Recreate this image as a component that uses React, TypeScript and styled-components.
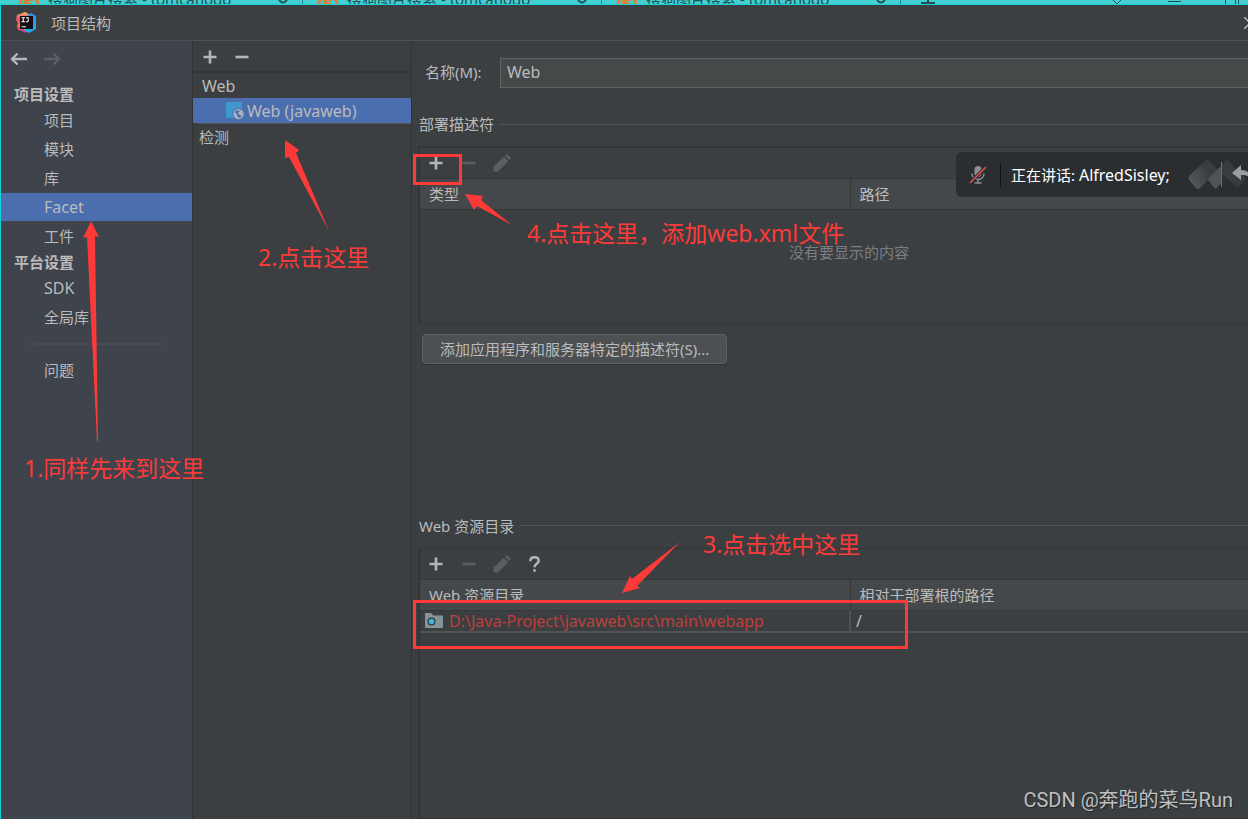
import React from 'react';
import styled, { createGlobalStyle } from 'styled-components';

const uiFont = '"Noto Sans", "Noto Sans CJK SC", sans-serif';

const GlobalStyle = createGlobalStyle`
  * { box-sizing: border-box; }
  body { margin: 0; background: #3c3f41; }
  button, input { font: inherit; color: inherit; }
`;

const Screen = styled.div`
  position: relative;
  display: flex;
  flex-direction: column;
  min-height: 100vh;
  overflow: hidden;
  background: #3c3f41;
  color: #bbbbbb;
  font-family: ${uiFont};
  font-size: 15px;
  line-height: 24px;
`;

/* Browser tabs showing behind the dialog */
const TabStrip = styled.div`
  display: flex;
  height: 5px;
  padding-left: 4px;
  overflow: hidden;
  background: #44cfd2;
  border-bottom: 1px solid #16d4d6;
  color: #1e5054;
`;
const Tab = styled.div`
  display: flex;
  align-items: flex-end;
  flex: none;
  width: 299px;
  height: 4px;
  padding: 0 14px;
  gap: 8px;
  border-right: 1px solid #24888b;
`;
const TabTitle = styled.span`
  flex: 1;
  line-height: 10px;
  white-space: nowrap;
`;
const TabTools = styled.div`
  display: flex;
  flex: 1;
  padding: 0 8px 0 20px;
  justify-content: space-between;
`;

const Dialog = styled.div`
  display: flex;
  flex: 1;
  flex-direction: column;
  border-left: 1px solid #16d4d6;
`;
const TitleBar = styled.header`
  display: flex;
  align-items: center;
  height: 36px;
  padding-left: 15px;
  gap: 14px;
  border-bottom: 1px solid #515151;
`;
const Title = styled.h1`
  flex: 1;
  margin: 0;
  font-size: 15px;
  font-weight: 400;
`;
const CloseButton = styled.button`
  display: flex;
  width: 4px;
  padding: 0;
  overflow: hidden;
  border: 0;
  background: none;
  svg { flex: none; }
`;
const Body = styled.div`
  display: flex;
  flex: 1;
`;

const Sidebar = styled.nav`
  flex: none;
  width: 192px;
  background: #3e434c;
  border-right: 1px solid #323232;
`;
const History = styled.div`
  display: flex;
  align-items: center;
  height: 36px;
  margin-bottom: 5px;
  padding-left: 8px;
  gap: 13px;
`;
const IconButton = styled.button`
  display: flex;
  align-items: center;
  justify-content: center;
  width: 20px;
  height: 20px;
  padding: 0;
  border: 0;
  background: none;
  color: #b4b8ba;
  &:disabled { color: #5c5f61; }
`;
const GroupTitle = styled.h2`
  margin: 0;
  padding-left: 13px;
  font-size: 15px;
  font-weight: 700;
`;
const NavList = styled.ul`
  display: flex;
  flex-direction: column;
  gap: 1px;
  margin: 0;
  padding: 0;
  list-style: none;
`;
const NavLink = styled.a<{ $active?: boolean; $latin?: boolean }>`
  display: block;
  height: 28px;
  padding-left: 43px;
  font-size: ${p => (p.$latin ? 16 : 15)}px;
  line-height: 28px;
  color: inherit;
  text-decoration: none;
  background: ${p => (p.$active ? '#4b6eaf' : 'transparent')};
`;
const Rule = styled.hr`
  height: 2px;
  margin: 12px 12px 11px;
  border: 0;
  background: linear-gradient(90deg, transparent, #4a4c51 20%, #4a4c51 80%, transparent);
`;

const FacetPane = styled.aside`
  flex: none;
  width: 219px;
  border-right: 1px solid #323232;
`;
const FacetTools = styled.div`
  display: flex;
  align-items: center;
  height: 32px;
  padding: 2px 0 0 7px;
  gap: 12px;
  border-bottom: 2px solid #353535;
`;
const TreeRow = styled.div<{ $depth?: boolean; $active?: boolean }>`
  display: flex;
  align-items: center;
  height: 25px;
  gap: 2px;
  padding-left: ${p => (p.$depth ? 33 : 9)}px;
  font-size: 16px;
  background: ${p => (p.$active ? '#4b6eaf' : 'transparent')};
`;
const Detected = styled.div`
  margin-left: 5px;
  border-top: 1px solid #515355;
  padding: 1px 0 0 1px;
`;

const Main = styled.main`
  display: flex;
  flex: 1;
  flex-direction: column;
  min-width: 0;
  padding-left: 6px;
  overflow: hidden;
`;
const NameRow = styled.div`
  display: flex;
  align-items: center;
  height: 30px;
  margin-top: 17px;
  padding-left: 7px;
`;
const NameLabel = styled.label`
  width: 75px;
  padding-bottom: 2px;
`;
const NameInput = styled.input`
  flex: 1;
  min-width: 0;
  height: 30px;
  padding: 0 6px 2px;
  border: 1px solid #646464;
  border-right: 0;
  border-radius: 0;
  background: #45494a;
  font-size: 16px;
  outline: 0;
`;
const SectionTitle = styled.h3`
  display: flex;
  align-items: center;
  gap: 6px;
  height: 24px;
  margin: 24px 0 10px;
  padding-left: 1px;
  font-size: 15px;
  font-weight: 400;
  &::after {
    content: '';
    flex: 1;
    height: 1px;
    background: #515355;
  }
`;
const Panel = styled.section<{ $grow?: boolean }>`
  flex: ${p => (p.$grow ? '1' : 'none')};
  margin-right: -32px;
  border: 2px solid #353535;
  border-bottom-width: 1px;
  border-top-width: ${p => (p.$grow ? '1px' : '2px')};
`;
const PanelTools = styled.div`
  display: flex;
  align-items: center;
  height: 30px;
  padding-left: 6px;
  gap: 13px;
`;
const Table = styled.table`
  width: 100%;
  border-collapse: collapse;
  table-layout: fixed;
`;
const HeadCell = styled.th<{ $first?: boolean }>`
  width: ${p => (p.$first ? '430px' : 'auto')};
  height: 31px;
  padding: 0 0 0 9px;
  border: solid #343637;
  border-width: 1px ${p => (p.$first ? '1px' : '0')} 1px 0;
  background: #45484a;
  font-weight: 400;
  text-align: left;
`;
const Cell = styled.td`
  height: 22px;
  padding: 0 0 0 5px;
  border-bottom: 2px solid #515355;
  font-size: 16px;
  line-height: 20px;
  &:first-child { border-right: 2px solid #515355; }
`;
const PathValue = styled.span`
  display: flex;
  align-items: center;
  gap: 6px;
  color: #bc3f3c;
`;
const EmptyCell = styled.td`
  height: 113px;
  padding: 0 0 28px;
  color: #7c7e80;
  text-align: center;
`;
const DescriptorButton = styled.button`
  align-self: flex-start;
  height: 30px;
  margin: 10px 0 126px 4px;
  padding: 0 17px;
  border: 1px solid #5e6060;
  border-radius: 4px;
  background: #4c5052;
  line-height: 28px;
  box-shadow: 0 1px 1px #333537;
`;

/* Meeting toolbar floating over the dialog */
const SpeakerToast = styled.div`
  position: absolute;
  top: 152px;
  right: 0;
  display: flex;
  align-items: center;
  width: 292px;
  height: 45px;
  padding-left: 12px;
  overflow: hidden;
  border-radius: 6px 0 0 6px;
  background: #2b2e31;
  color: #ffffff;
`;
const SpeakerLabel = styled.span`
  flex: 1;
  margin-left: 12px;
  padding-left: 10px;
  border-left: 1px solid #0f1012;
  white-space: nowrap;
`;
const SpeakerName = styled.span`
  font-size: 16px;
`;

const Arrows = styled.svg`
  position: absolute;
  top: 0;
  left: 0;
  fill: #fe3a38;
  pointer-events: none;
`;
const Note = styled.p<{ $x: number; $y: number }>`
  position: absolute;
  left: ${p => p.$x}px;
  top: ${p => p.$y}px;
  margin: 0;
  color: #fe3a38;
  font-size: 23px;
  line-height: 32px;
  white-space: nowrap;
`;
const Frame = styled.div<{ $x: number; $y: number; $w: number; $h: number }>`
  position: absolute;
  left: ${p => p.$x}px;
  top: ${p => p.$y}px;
  width: ${p => p.$w}px;
  height: ${p => p.$h}px;
  border: 3px solid #fe3a38;
  pointer-events: none;
`;
const Watermark = styled.div`
  position: absolute;
  right: 15px;
  bottom: 5px;
  color: #bfc0c1;
  font-family: Roboto, "Noto Sans CJK SC", sans-serif;
  font-size: 20px;
  line-height: 28px;
  text-shadow: 1px 1px 1px #222425;
`;

const PlusIcon = () => (
  <svg width="14" height="14" viewBox="0 0 14 14" fill="none" stroke="currentColor" strokeWidth="2.6">
    <path d="M7 .5v13M.5 7h13" />
  </svg>
);
const MinusIcon = () => (
  <svg width="14" height="14" viewBox="0 0 14 14" fill="none" stroke="currentColor" strokeWidth="2.6">
    <path d="M.5 7h13" />
  </svg>
);
const PencilIcon = () => (
  <svg width="18" height="18" viewBox="0 0 18 18" fill="currentColor">
    <path d="M.6 17.4v-4.8L10.8 2.8l4.4 4.4L5 17.4zM12 1.8l1-1.1q.9-.8 1.8 0l2.5 2.5q.8.9 0 1.8l-1.1 1z" />
  </svg>
);
const HelpIcon = () => (
  <svg width="14" height="18" viewBox="0 0 14 18" fill="none" stroke="currentColor" strokeWidth="2.4">
    <path d="M2.3 6.2C2.3 3.4 3.900 2.2 6.500 2.2s4.2 1.4 4.2 3.5c0 3-4.2 3.2-4.2 6.6" />
    <path d="M6.500 14.2v2.6" />
  </svg>
);
const ArrowIcon = ({ forward }: { forward?: boolean }) => (
  <svg width="18" height="14" viewBox="0 0 18 14" fill="none" stroke="currentColor" strokeWidth="2.4">
    <path d={forward ? 'M1 7h15M10.5 1.5L16 7l-5.5 5.5' : 'M17 7H2M7.5 1.5L2 7l5.5 5.5'} />
  </svg>
);
const IdeaLogo = () => (
  <svg width="21" height="21" viewBox="0 0 21 21">
    <defs>
      <linearGradient id="warm" x1="0" y1="0" x2="0" y2="1">
        <stop offset="0" stopColor="#f8b85a" />
        <stop offset=".35" stopColor="#f0457a" />
        <stop offset=".6" stopColor="#f47a30" />
        <stop offset="1" stopColor="#d92fa8" />
      </linearGradient>
      <linearGradient id="cool" x1="0" y1="0" x2="0" y2="1">
        <stop offset="0" stopColor="#2f8ff0" />
        <stop offset="1" stopColor="#12b2f2" />
      </linearGradient>
    </defs>
    <path d="M1 3l3-1 5-2 4 2v15l-3 4-4-2-4-1-1-4 1-3-2-3z" fill="url(#warm)" />
    <path d="M11 4l4-3 5 3v13l-7 4-5-3z" fill="url(#cool)" />
    <path d="M4 4h13v13H4z" fill="#160b12" />
    <path d="M5.500 5.700h3.500M7.200 5.700v4M5.500 9.700h3.500M10 5.700h2.200v3q0 1-1.100 1H9.800M5.500 14.700h4.500" fill="none" stroke="#fff" strokeWidth="1.1" />
  </svg>
);
const WebFacetIcon = () => (
  <svg width="19" height="19" viewBox="0 0 19 19">
    <path d="M0 1h16v16H0z" fill="#3e97cd" />
    <circle cx="12.5" cy="13" r="6.2" fill="#4b6eaf" />
    <circle cx="12.5" cy="13" r="4.6" fill="none" stroke="#a9b3bb" strokeWidth="1.3" />
    <path d="M8 11l3 2v2l1.5 1v1.500q-4-.5-4.500-4zM12 9l4 1 .8 4-1.600 2-1-2-2-1v-1.500l1.500-.8z" fill="#a9b3bb" />
  </svg>
);
const FolderIcon = () => (
  <svg width="18" height="15" viewBox="0 0 18 15">
    <path d="M0 0h6l2.5 2.5H18V15H0z" fill="#87939a" />
    <circle cx="6.5" cy="8.5" r="4" fill="#303538" />
    <circle cx="6.5" cy="8.5" r="2.8" fill="#40b6e0" />
  </svg>
);
const CloseIcon = () => (
  <svg width="12" height="12" viewBox="0 0 12 12" fill="none" stroke="#bbbbbb" strokeWidth="1.5">
    <path d="M0 0l12 12M12 0L0 12" />
  </svg>
);
const MutedMic = () => (
  <svg width="20" height="20" viewBox="0 0 20 20" fill="none">
    <rect x="6.5" y="1" width="7" height="11" rx="3.5" fill="#8c9093" />
    <path d="M4 8.500c0 8 12 8 12 0M10 15v3M6.500 18h7" stroke="#8c9093" strokeWidth="1.6" />
    <path d="M2 18L18 2" stroke="#2b2e31" strokeWidth="3.6" />
    <path d="M2 18L18 2" stroke="#e5544b" strokeWidth="1.6" />
  </svg>
);
const ToastArt = () => (
  <svg width="60" height="36" viewBox="0 0 60 36">
    <defs>
      <linearGradient id="rise" x1="0" y1="1" x2="1" y2="0">
        <stop offset="0" stopColor="#5b5e61" />
        <stop offset="1" stopColor="#34373a" />
      </linearGradient>
    </defs>
    <path d="M33 8l6-5 19 19-8 9-17-15z" fill="#393c3f" />
    <path d="M2 18L19 2v22l-7 7q-2 2-4 0l-6-7q-3-3 0-6z" fill="url(#rise)" />
    <path d="M19 2l16 16-9 11-7-6z" fill="#3b3e41" />
    <path d="M20 22l13-13v17l-4 5q-2 1-3 0z" fill="#505356" />
    <path d="M33.500 5v25" stroke="#6d7073" />
    <path d="M44 16l9-8v5c6 0 9 3 10 9-3-4-6-4-10-4v5z" fill="#9b9ea1" />
  </svg>
);
const TabLogo = () => (
  <svg width="22" height="10" viewBox="0 0 22 10" fill="none" stroke="#e97b2c" strokeWidth="2.5">
    <path d="M2 10q0-4 4-6M20 10q0-4-4-6M15 6q-8-1-8 3 6 0 8 3" />
  </svg>
);
const TabClose = () => (
  <svg width="10" height="4" viewBox="0 0 10 4" fill="none" stroke="currentColor" strokeWidth="2">
    <path d="M1 0q4 5 8 0" />
  </svg>
);

const projectItems = ['项目', '模块', '库', 'Facet', '工件'];
const platformItems = ['SDK', '全局库'];
const latinOnly = /^[A-Za-z]+$/;

function NavGroup({ items, active }: { items: string[]; active?: string }) {
  return (
    <NavList>
      {items.map(item => (
        <li key={item}>
          <NavLink href="#" $active={item === active} $latin={latinOnly.test(item)}>{item}</NavLink>
        </li>
      ))}
    </NavList>
  );
}

function ListTools({ help }: { help?: boolean }) {
  return (
    <PanelTools>
      <IconButton aria-label="添加"><PlusIcon /></IconButton>
      <IconButton aria-label="移除" disabled><MinusIcon /></IconButton>
      <IconButton aria-label="编辑" disabled><PencilIcon /></IconButton>
      {help && <IconButton aria-label="帮助"><HelpIcon /></IconButton>}
    </PanelTools>
  );
}

export default function App() {
  return (
    <Screen>
      <GlobalStyle />
      <TabStrip aria-hidden="true">
        {[0, 1, 2].map(i => (
          <Tab key={i}>
            <TabLogo />
            <TabTitle>搜狗图片搜索 - tomcatlogo</TabTitle>
            <TabClose />
          </Tab>
        ))}
        <TabTools>
          <svg width="14" height="4" viewBox="0 0 14 4" stroke="currentColor" strokeWidth="2"><path d="M7 0v3M0 3h14" /></svg>
          <svg width="128" height="4" viewBox="0 0 128 4" stroke="currentColor" fill="none"><path d="M1 0l4 4 4-4M56 1.500h13M113.500 0v4M123.500 0v4M126.500 0v4" /></svg>
        </TabTools>
      </TabStrip>

      <Dialog>
        <TitleBar>
          <IdeaLogo />
          <Title>项目结构</Title>
          <CloseButton aria-label="关闭"><CloseIcon /></CloseButton>
        </TitleBar>
        <Body>
          <Sidebar>
            <History>
              <IconButton aria-label="后退"><ArrowIcon /></IconButton>
              <IconButton aria-label="前进" disabled><ArrowIcon forward /></IconButton>
            </History>
            <GroupTitle>项目设置</GroupTitle>
            <NavGroup items={projectItems} active="Facet" />
            <GroupTitle>平台设置</GroupTitle>
            <NavGroup items={platformItems} />
            <Rule />
            <NavGroup items={['问题']} />
          </Sidebar>

          <FacetPane>
            <FacetTools>
              <IconButton aria-label="添加"><PlusIcon /></IconButton>
              <IconButton aria-label="移除"><MinusIcon /></IconButton>
            </FacetTools>
            <TreeRow>Web</TreeRow>
            <TreeRow $depth $active><WebFacetIcon />Web (javaweb)</TreeRow>
            <Detected>检测</Detected>
          </FacetPane>

          <Main>
            <NameRow>
              <NameLabel htmlFor="facet-name">名称(M):</NameLabel>
              <NameInput id="facet-name" defaultValue="Web" />
            </NameRow>

            <SectionTitle>部署描述符</SectionTitle>
            <Panel>
              <ListTools />
              <Table>
                <thead>
                  <tr><HeadCell $first>类型</HeadCell><HeadCell>路径</HeadCell></tr>
                </thead>
                <tbody>
                  <tr><EmptyCell colSpan={2}>没有要显示的内容</EmptyCell></tr>
                </tbody>
              </Table>
            </Panel>
            <DescriptorButton>添加应用程序和服务器特定的描述符(S)...</DescriptorButton>

            <SectionTitle>Web 资源目录</SectionTitle>
            <Panel $grow>
              <ListTools help />
              <Table>
                <thead>
                  <tr><HeadCell $first>Web 资源目录</HeadCell><HeadCell>相对于部署根的路径</HeadCell></tr>
                </thead>
                <tbody>
                  <tr>
                    <Cell><PathValue><FolderIcon />D:\Java-Project\javaweb\src\main\webapp</PathValue></Cell>
                    <Cell>/</Cell>
                  </tr>
                </tbody>
              </Table>
            </Panel>
          </Main>
        </Body>
      </Dialog>

      <SpeakerToast>
        <MutedMic />
        <SpeakerLabel>正在讲话: <SpeakerName>AlfredSisley;</SpeakerName></SpeakerLabel>
        <ToastArt />
      </SpeakerToast>

      <Frame $x={413} $y={154} $w={49} $h={31} />
      <Frame $x={413} $y={600} $w={495} $h={49} />
      <Arrows width="700" height="620" viewBox="0 0 700 620">
        <path d="M91 221l8 16-4-1 3 205h-1L87 237l-4 1z" />
        <path d="M285 140l14 10-3 3 33 78-40-74-4 1z" />
        <path d="M465 194l18 2-2 4 31 25-35-19-3 4z" />
        <path d="M622 593l8-17 2 3 48-37-43 44 3 2z" />
      </Arrows>
      <Note $x={24} $y={452}>1.同样先来到这里</Note>
      <Note $x={258} $y={241}>2.点击这里</Note>
      <Note $x={703} $y={528}>3.点击选中这里</Note>
      <Note $x={527} $y={217}>4.点击这里，添加web.xml文件</Note>
      <Watermark>CSDN @奔跑的菜鸟Run</Watermark>
    </Screen>
  );
}
